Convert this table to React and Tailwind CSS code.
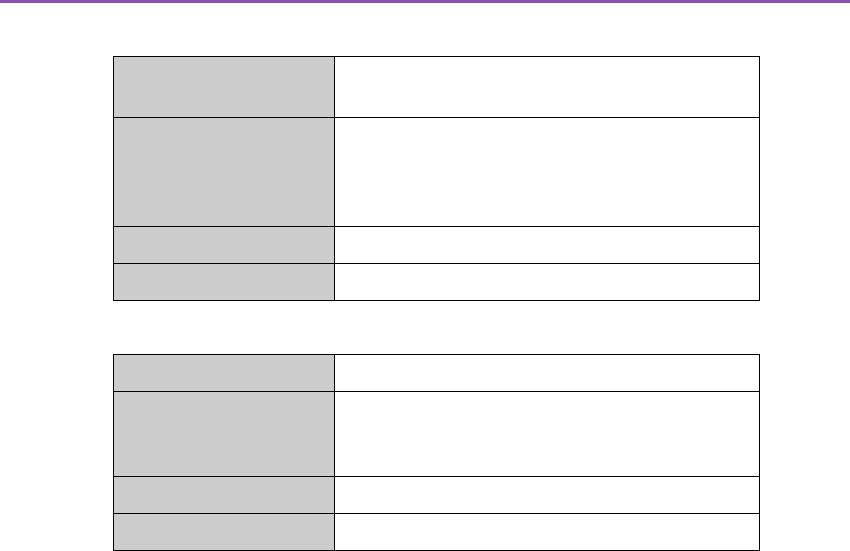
// Two blank spec tables under a purple header rule

const tables = [
  [61, 109, 37, 37],
  [37, 85, 37, 37],
];

function SpecTable({ rows }) {
  return (
    <div className="grid w-[647px] grid-cols-[221px_425px] border-r border-b border-black">
      {rows.map((h, i) => (
        <div key={i} className="contents">
          <div className="border-l border-t border-black bg-[#cccccc]" style={{ height: h }} />
          <div className="border-l border-t border-black bg-white" style={{ height: h }} />
        </div>
      ))}
    </div>
  );
}

export default function App() {
  return (
    <div className="w-[850px] h-[551px] overflow-hidden bg-white font-['Liberation_Sans',sans-serif]">
      <div className="h-[3px] bg-[#8750b3]" />
      <div className="flex flex-col gap-[53px] pl-[113px] pt-[53px]">
        {tables.map((rows, i) => (
          <SpecTable key={i} rows={rows} />
        ))}
      </div>
    </div>
  );
}
